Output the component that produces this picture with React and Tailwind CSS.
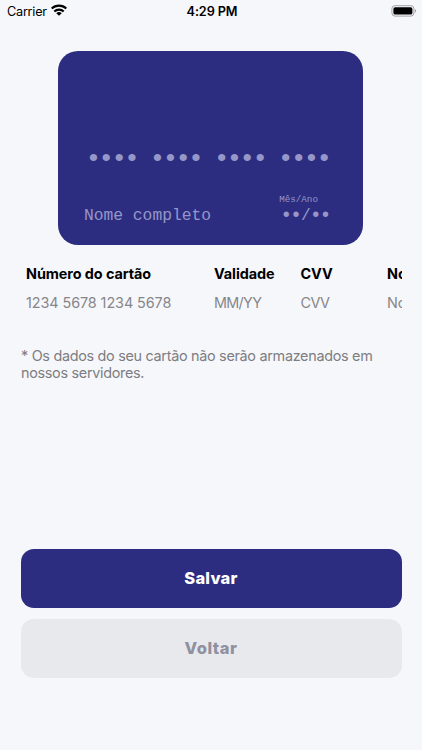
import React from 'react';

const fields = [
  { id: 'number', label: 'Número do cartão', placeholder: '1234 5678 1234 5678', width: 'w-[188px]', tracking: 'tracking-[-0.08px]' },
  { id: 'expiry', label: 'Validade', placeholder: 'MM/YY', width: 'w-[86.5px]', tracking: 'tracking-[-0.7px]' },
  { id: 'cvc', label: 'CVV', placeholder: 'CVV', width: 'w-[86.5px]', tracking: 'tracking-[-0.6px]' },
  { id: 'name', label: 'Nome completo', placeholder: 'Nome completo', width: 'w-[188px]', tracking: 'tracking-[-0.1px]' },
];

function StatusBar() {
  return (
    <div className="flex h-[22px] items-center pl-[7px] pr-[5px] text-black">
      <div className="flex flex-1 items-center gap-[4px]">
        <span className="pt-px text-[12.7px] tracking-[-0.25px]">Carrier</span>
        <svg width="16" height="12" viewBox="0 0 15 11" className="-mt-px">
          <path d="M0 3.5a10.6 10.6 0 0 1 15 0L13.7 4.9a8.8 8.8 0 0 0-12.4 0z" />
          <path d="M2.4 6.1a7.2 7.2 0 0 1 10.2 0L11.2 7.6a5.3 5.3 0 0 0-7.4 0z" />
          <path d="M4.9 8.6a3.7 3.7 0 0 1 5.2 0L7.5 11z" />
        </svg>
      </div>
      <span className="pt-px text-[12.7px] font-semibold tracking-[-0.1px]">4:29 PM</span>
      <div className="flex flex-1 items-center justify-end">
        <svg width="26" height="12" viewBox="0 0 26 12" className="-mt-px">
          <rect x="0.9" y="0.7" width="22" height="10.4" rx="3" fill="none" stroke="#a2a2a8" />
          <rect x="2.4" y="2.2" width="19" height="7.4" rx="1.7" />
          <path d="M24.1 4v3.8c1.4-.6 1.4-3.2 0-3.8z" fill="#98989e" />
        </svg>
      </div>
    </div>
  );
}

function CreditCard() {
  return (
    <div className="mr-auto ml-[58px] mt-[29px] h-[193.5px] w-[305.3px] rounded-[20px] bg-[#2c2d81] font-['Liberation_Mono',monospace] text-[#9697c8]">
      <p className="whitespace-pre pt-[96px] pl-[27.5px] text-[26.5px] leading-6 tracking-[-3.08px]">•••• •••• •••• ••••</p>
      <div className="mt-[23px] flex items-end justify-between pr-[34px] pl-[26px]">
        <p className="text-[16.3px] leading-5">Nome completo</p>
        <div>
          <p className="pl-px text-[9.2px] leading-3">Mês/Ano</p>
          <p className="flex pl-[2px] leading-5">
            <span className="text-[20px] tracking-[-2.2px]">••</span>
            <span className="pl-px text-[16.3px]">/</span>
            <span className="-ml-px text-[20px] tracking-[-2.2px]">••</span>
          </p>
        </div>
      </div>
    </div>
  );
}

export default function App() {
  return (
    <main className="h-[750px] w-[422px] overflow-hidden bg-[#f6f7fb] font-['Inter',sans-serif]">
      <StatusBar />
      <CreditCard />

      {/* campos do formulário */}
      <div className="mr-[20px] ml-[21px] mt-[20px] flex overflow-hidden pl-[5px]">
        {fields.map(({ id, label, placeholder, width, tracking }) => (
          <label key={id} className={`${width} shrink-0 whitespace-nowrap`}>
            <span className="block text-[14.4px] leading-[18px] font-bold tracking-[-0.08px] text-black">{label}</span>
            <span className={`${tracking} mt-[10px] block text-[14.4px] leading-5 text-[#86868a]`}>{placeholder}</span>
          </label>
        ))}
      </div>

      <p className="mt-[34px] ml-[21px] w-[370px] text-[14.4px] leading-[17.5px] tracking-[-0.3px] text-[#7d7d82]">
        * Os dados do seu cartão não serão armazenados em nossos servidores.
      </p>

      {/* botões */}
      <div className="mr-[20.5px] ml-[20.5px] mt-[167px] flex flex-col gap-[10.5px] text-[16.5px] font-extrabold tracking-[0.2px]">
        <button className="h-[59.5px] rounded-[13px] bg-[#2c2d81] pt-px text-white">Salvar</button>
        <button className="h-[59.5px] rounded-[13px] bg-[#e8e9ed] pt-px tracking-[0.5px] text-[#9091a0]">Voltar</button>
      </div>
    </main>
  );
}
